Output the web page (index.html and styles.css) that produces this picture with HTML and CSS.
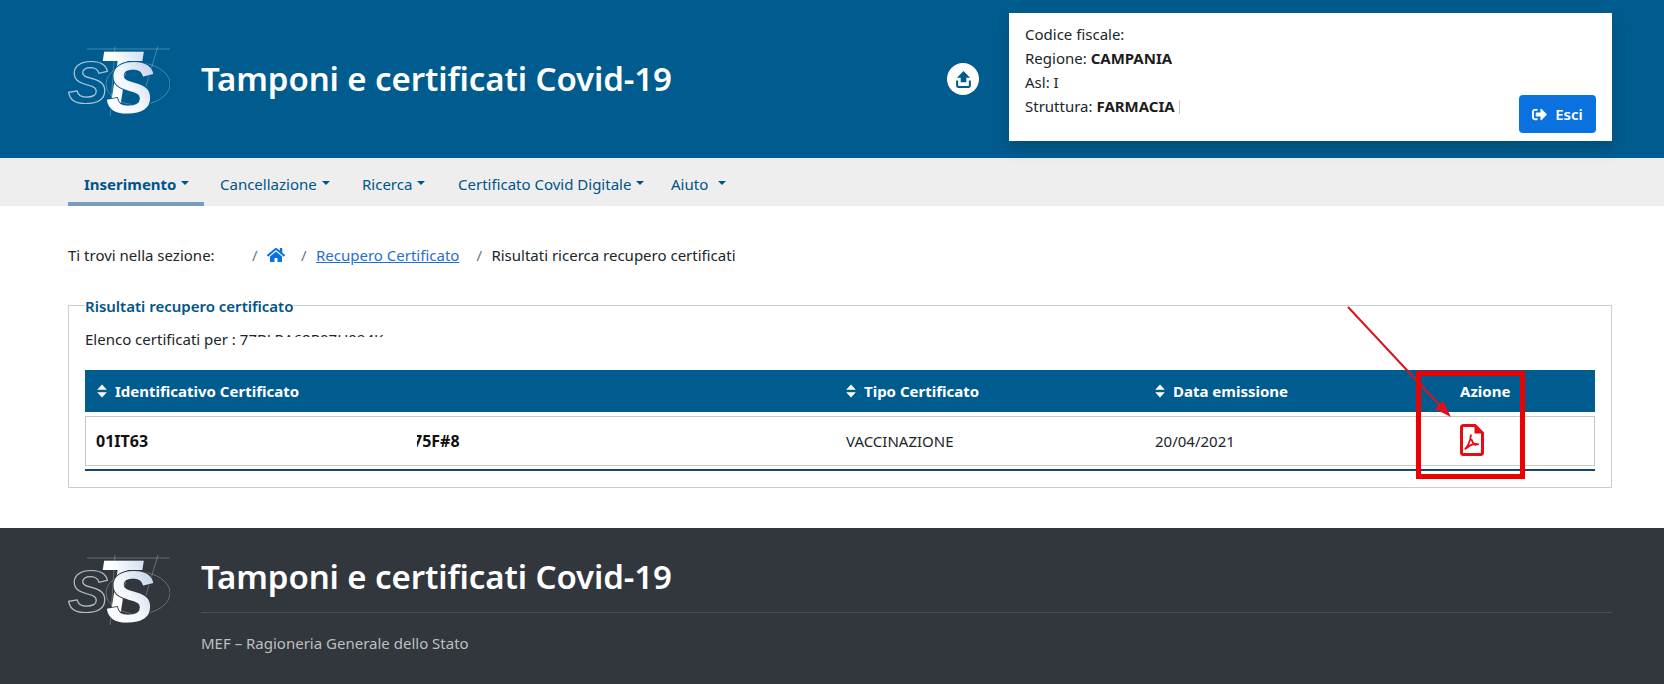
FILE: index.html
```html
<!DOCTYPE html>
<html lang="it">
<head>
<meta charset="utf-8">
<title>Tamponi e certificati Covid-19</title>
<link rel="stylesheet" href="styles.css">
</head>
<body>
<svg class="defs" width="0" height="0" aria-hidden="true">
  <defs>
    <linearGradient id="sgrad" x1="0" y1="1" x2="1" y2="0">
      <stop offset="0" stop-color="#ffffff"/>
      <stop offset="0.5" stop-color="#f4f7fc"/>
      <stop offset="1" stop-color="#b4c8e6"/>
    </linearGradient>
    <linearGradient id="tgrad" x1="1" y1="0" x2="0" y2="1">
      <stop offset="0" stop-color="#c9d6ec"/>
      <stop offset="0.5" stop-color="#ffffff"/>
      <stop offset="1" stop-color="#ffffff"/>
    </linearGradient>
    <symbol id="logo" viewBox="0 0 102 70">
      <g fill="none" stroke="currentColor" stroke-opacity=".3" stroke-width="1">
        <path d="M19 3H102M90 0L72 60"/>
        <ellipse cx="70" cy="38" rx="32" ry="21"/>
        <path d="M47 0L42 73"/>
      </g>
      <text x="0" y="57" class="logo-s1">S</text>
      <text x="30" y="63" class="logo-t" fill="url(#tgrad)" transform="translate(30 0) scale(.8 1) translate(-30 0)">T</text>
      <text x="38" y="67" class="logo-s2" fill="url(#sgrad)">S</text>
    </symbol>
  </defs>
</svg>

<header class="top">
  <svg class="logo"><use href="#logo"/></svg>
  <h1 class="brand">Tamponi e certificati Covid-19</h1>
  <span class="round-btn">
    <svg viewBox="0 0 16 18" width="15" height="17"><path d="M8 0L15 7H11V12H5V7H1Z"/><path d="M1.200 10V15.500Q1.200 17 2.700 17H13.300Q14.800 17 14.800 15.500V10" fill="none" stroke="currentColor" stroke-width="2.200"/></svg>
  </span>
  <section class="user-card">
    <p>Codice fiscale:</p>
    <p>Regione: <b>CAMPANIA</b></p>
    <p>Asl: I</p>
    <p>Struttura: <b>FARMACIA</b> <span class="bar"></span></p>
    <a class="exit">
      <svg viewBox="0 0 512 512" width="15" height="15"><path d="M497 273L329 441c-15 15-41 4.500-41-17v-96H152c-13.300 0-24-10.700-24-24v-96c0-13.300 10.700-24 24-24h136V88c0-21.400 25.900-32 41-17l168 168c9.300 9.400 9.300 24.600 0 34zM192 436v-40c0-6.600-5.400-12-12-12H96c-17.700 0-32-14.300-32-32V160c0-17.700 14.300-32 32-32h84c6.600 0 12-5.400 12-12V76c0-6.600-5.400-12-12-12H96c-53 0-96 43-96 96v192c0 53 43 96 96 96h84c6.600 0 12-5.400 12-12z"/></svg>
      Esci
    </a>
  </section>
</header>

<nav class="menu">
  <a class="tab active">Inserimento<i class="caret"></i></a>
  <a class="tab t2">Cancellazione<i class="caret"></i></a>
  <a class="tab t3">Ricerca<i class="caret"></i></a>
  <a class="tab t4">Certificato Covid Digitale<i class="caret"></i></a>
  <a class="tab t5">Aiuto<i class="caret wide"></i></a>
</nav>

<main class="content">
  <div class="crumbs">
    <span class="crumb-label">Ti trovi nella sezione:</span>
    <span class="sep">/</span>
    <svg class="home" viewBox="0 0 576 512" width="18" height="16"><path d="M280.370 148.260L96 300.110V464a16 16 0 0 0 16 16l112.060-.29a16 16 0 0 0 15.920-16V368a16 16 0 0 1 16-16h64a16 16 0 0 1 16 16v95.640a16 16 0 0 0 16 16.050L464 480a16 16 0 0 0 16-16V300L295.670 148.260a12.190 12.190 0 0 0-15.300 0zM571.600 251.470L488 182.560V44.050a12 12 0 0 0-12-12h-56a12 12 0 0 0-12 12v72.610L318.470 43a48 48 0 0 0-61 0L4.340 251.470a12 12 0 0 0-1.600 16.900l25.500 31A12 12 0 0 0 45.150 301l235.220-193.740a12.190 12.190 0 0 1 15.300 0L530.900 301a12 12 0 0 0 16.900-1.600l25.500-31a12 12 0 0 0-1.700-16.930z"/></svg>
    <span class="sep after-home">/</span>
    <a class="crumb-link">Recupero Certificato</a>
    <span class="sep after-link">/</span>
    <span>Risultati ricerca recupero certificati</span>
  </div>

  <fieldset class="panel">
    <legend>Risultati recupero certificato</legend>
    <p class="intro">Elenco certificati per : <span class="redacted">7ZBLRA68R07H094K</span></p>
    <div class="cols head">
      <span><svg class="sort" viewBox="0 0 10 14" width="10" height="14"><path d="M5 0.500L9.800 5.800H0.200ZM5 13.500L0.200 8.200H9.800Z"/></svg>Identificativo Certificato</span>
      <span><svg class="sort" viewBox="0 0 10 14" width="10" height="14"><path d="M5 0.500L9.800 5.800H0.200ZM5 13.500L0.200 8.200H9.800Z"/></svg>Tipo Certificato</span>
      <span><svg class="sort" viewBox="0 0 10 14" width="10" height="14"><path d="M5 0.500L9.800 5.800H0.200ZM5 13.500L0.200 8.200H9.800Z"/></svg>Data emissione</span>
      <span>Azione</span>
    </div>
    <div class="cols row">
      <span class="cert"><b class="cert-a">01IT63</b><b class="cert-b">75F#8</b></span>
      <span>VACCINAZIONE</span>
      <span>20/04/2021</span>
      <span>
        <svg class="pdf" viewBox="0 0 24 32" width="24" height="32">
          <path d="M3.500 1.500H15L22.500 9V28.500Q22.500 30.500 20.500 30.500H3.500Q1.500 30.500 1.500 28.500V3.500Q1.500 1.500 3.500 1.500Z" fill="none" stroke="currentColor" stroke-width="3"/>
          <path d="M14.500 1.500V9.500H22.500Z"/>
          <path d="M11 10.500C10.500 16 8 22 4.800 25.500M6 24.500C10 20.500 14 19 19 20.500M11.200 15C12 18 14 20 16 21.500" fill="none" stroke="currentColor" stroke-width="1.800"/>
        </svg>
      </span>
    </div>
    <div class="rule"></div>
  </fieldset>
</main>

<footer class="foot">
  <svg class="logo"><use href="#logo"/></svg>
  <div class="foot-main">
    <div class="brand">Tamponi e certificati Covid-19</div>
    <p class="foot-note">MEF – Ragioneria Generale dello Stato</p>
  </div>
</footer>

<svg class="annot" viewBox="0 0 1664 684" width="1664" height="684" aria-hidden="true">
  <line x1="1348" y1="307" x2="1446" y2="412" stroke="#d8141e" stroke-width="2"/>
  <path d="M1451 417L1435 409L1443 401Z" fill="#e0101c"/>
  <rect x="1418.500" y="373.500" width="104" height="103" fill="none" stroke="#ee0000" stroke-width="5"/>
</svg>
</body>
</html>
```

FILE: styles.css
```css
* { box-sizing: border-box; }

html, body {
  margin: 0;
  padding: 0;
}

body {
  position: relative;
  width: 1664px;
  height: 684px;
  overflow: hidden;
  background: #fff;
  color: #212529;
  font: 400 15px/24px "Noto Sans", "Open Sans", sans-serif;
}

p { margin: 0; }

.defs { position: absolute; }

.logo-s1 {
  font: 700 italic 60px "Liberation Sans", sans-serif;
  fill: none;
  stroke: currentColor;
  stroke-opacity: .75;
  stroke-width: 1.200;
}

.logo-t {
  font: 700 italic 84px "Liberation Sans", sans-serif;
}

.logo-s2 {
  font: 700 italic 72px "Liberation Sans", sans-serif;
  stroke: var(--logo-bg);
  stroke-width: 2;
  paint-order: stroke;
}

.logo {
  display: block;
  width: 102px;
  height: 70px;
  flex: none;
  color: #dfe9f3;
  overflow: visible;
}

.brand {
  margin: 0;
  color: #fff;
  font: 600 33px/44px "Noto Sans", sans-serif;
  letter-spacing: -.1px;
  white-space: nowrap;
}

.top {
  --logo-bg: #005c8f;
  display: flex;
  align-items: center;
  height: 158px;
  padding-left: 68px;
  padding-right: 52px;
  background: #005c8f;
}

.top .logo { margin-top: 4px; }

.top .brand {
  flex: 1;
  margin-left: 31px;
}

.round-btn {
  display: flex;
  align-items: center;
  justify-content: center;
  width: 32px;
  height: 32px;
  margin-right: 30px;
  border-radius: 50%;
  background: #fff;
  color: #005c8f;
  fill: currentColor;
}

.user-card {
  position: relative;
  align-self: flex-start;
  width: 603px;
  height: 128px;
  margin-top: 13px;
  padding: 9px 16px;
  background: #fff;
  box-shadow: 0 8px 16px rgba(0, 0, 0, .16);
}

.user-card b { font-weight: 700; color: #1c1c1c; }

.bar {
  display: inline-block;
  width: 1px;
  height: 14px;
  background: #c9c9c9;
  vertical-align: -2px;
}

.exit {
  position: absolute;
  right: 16px;
  bottom: 8px;
  display: flex;
  align-items: center;
  justify-content: center;
  gap: 8px;
  width: 77px;
  height: 38px;
  border-radius: 4px;
  background: #0a72df;
  color: #fff;
  fill: currentColor;
  font-weight: 600;
}

.menu {
  display: flex;
  height: 48px;
  padding-left: 68px;
  background: #eee;
  color: #005488;
}

.tab {
  display: flex;
  align-items: center;
  height: 48px;
  padding: 3px 16px 0;
  white-space: nowrap;
}

.tab.active {
  width: 136px;
  padding-top: 7px;
  border-bottom: 4px solid #7a9cbf;
  font-weight: 700;
}

.t2 { width: 142px; }
.t3 { width: 96px; }
.t4 { width: 213px; }

.caret {
  width: 0;
  height: 0;
  margin-left: 5px;
  margin-top: -2px;
  border: 4.500px solid transparent;
  border-top-color: currentColor;
  border-bottom: 0;
}

.caret.wide { margin-left: 10px; }

.content {
  height: 322px;
  padding: 37px 52px 0 68px;
}

.crumbs {
  display: flex;
  align-items: center;
  height: 24px;
  white-space: nowrap;
}

.crumb-label { width: 184px; }

.sep {
  width: 15px;
  color: #6c757d;
}

.after-home { margin-left: 16px; }
.after-link { margin-left: 17px; }

.home { fill: #0a72df; flex: none; }

.crumb-link {
  color: #1f6fd0;
  text-decoration: underline;
}

.panel {
  height: 195px;
  margin: 26px 0 0;
  padding: 0 16px;
  border: 1px solid #cdcdcd;
  min-width: 0;
}

legend {
  padding: 3px 0 1px;
  color: #005488;
  font-weight: 600;
  line-height: 20px;
}

.intro {
  margin-top: 10px;
  height: 24px;
  white-space: nowrap;
}

.redacted {
  position: relative;
  display: inline-block;
}

.redacted::after {
  content: "";
  position: absolute;
  left: 8px;
  right: -4px;
  top: 10px;
  bottom: 0;
  background: #fff;
}

.cols {
  display: grid;
  grid-template-columns: 749px 309px 306px 146px;
  align-items: center;
}

.cols > span {
  display: flex;
  align-items: center;
  padding-left: 12px;
}

.cols > span:last-child { padding-left: 11px; }

.head {
  height: 42px;
  margin-top: 19px;
  background: #005c8f;
  color: #fff;
  font-weight: 700;
}

.sort {
  margin-right: 8px;
  fill: currentColor;
  flex: none;
}

.row {
  height: 50px;
  margin-top: 4px;
  border: 1px solid #c9c9c9;
  grid-template-columns: 748px 309px 306px 145px;
}

.cols > .cert { padding-left: 10px; }

.cert b { font-size: 16px; font-weight: 700; color: #111; }
.cert-a { width: 317px; }

.cert-b { position: relative; }

.cert-b::before {
  content: "";
  position: absolute;
  left: -1px;
  top: 0;
  width: 5px;
  bottom: 0;
  background: #fff;
}

.pdf {
  color: #ea0a14;
  fill: currentColor;
  display: block;
  margin-top: -2px;
}

.rule {
  height: 2px;
  margin-top: 3px;
  background: #14486e;
}

.foot {
  --logo-bg: #32373d;
  display: flex;
  height: 156px;
  padding: 27px 52px 0 68px;
  background: #32373d;
}

.foot-main {
  flex: 1;
  margin-left: 31px;
}

.foot .brand {
  height: 58px;
  border-bottom: 1px solid #4a4f55;
}

.foot-note {
  margin-top: 18px;
  color: #bdbfc1;
}

.annot {
  position: absolute;
  left: 0;
  top: 0;
  pointer-events: none;
}
```
